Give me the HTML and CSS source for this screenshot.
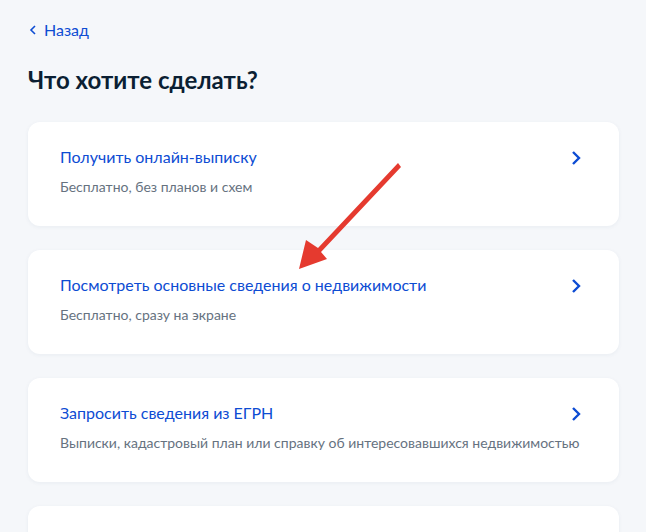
FILE: index.html
```html
<!DOCTYPE html>
<html lang="ru">
<head>
<meta charset="utf-8">
<link rel="stylesheet" href="styles.css">
</head>
<body>
<div class="page">
  <a class="back" href="#"><svg class="back-icon" viewBox="0 0 8 10" width="8" height="10"><path d="M6 1 L2 5 L6 9" fill="none" stroke="#0d4cd3" stroke-width="1.6"/></svg><span>Назад</span></a>
  <h1 class="title">Что хотите сделать?</h1>
  <div class="list">
    <a class="card" href="#">
      <div class="card-text">
        <div class="card-title">Получить онлайн-выписку</div>
        <div class="card-sub">Бесплатно, без планов и схем</div>
      </div>
      <svg class="chev" viewBox="0 0 10 16" width="10" height="16"><path d="M2 2 L8 8 L2 14" fill="none" stroke="#0d4cd3" stroke-width="2.4"/></svg>
    </a>
    <a class="card" href="#">
      <div class="card-text">
        <div class="card-title">Посмотреть основные сведения о недвижимости</div>
        <div class="card-sub">Бесплатно, сразу на экране</div>
      </div>
      <svg class="chev" viewBox="0 0 10 16" width="10" height="16"><path d="M2 2 L8 8 L2 14" fill="none" stroke="#0d4cd3" stroke-width="2.4"/></svg>
    </a>
    <a class="card" href="#">
      <div class="card-text">
        <div class="card-title">Запросить сведения из ЕГРН</div>
        <div class="card-sub">Выписки, кадастровый план или справку об интересовавшихся недвижимостью</div>
      </div>
      <svg class="chev" viewBox="0 0 10 16" width="10" height="16"><path d="M2 2 L8 8 L2 14" fill="none" stroke="#0d4cd3" stroke-width="2.4"/></svg>
    </a>
    <a class="card" href="#"></a>
  </div>
</div>
<svg class="arrow" viewBox="0 0 646 532" width="646" height="532">
  <path d="M401 167 L398 163 L318 248 L306 240 L299 269 L327 259 L321 252 Z" fill="#e53a2f"/>
</svg>
</body>
</html>
```

FILE: styles.css
```css
html, body {
  margin: 0;
  padding: 0;
  background: #f5f7fa;
  font-family: Lato, "Noto Sans", sans-serif;
  overflow: hidden;
  height: 532px;
}
.page {
  padding: 18px 27px 0 28px;
}
.back {
  display: inline-flex;
  align-items: center;
  gap: 7px;
  color: #0d4cd3;
  text-decoration: none;
  font-size: 16px;
  line-height: 24px;
}
.back-icon {
  margin-left: 1px;
}
.title {
  margin: 22px 0 26px;
  font-size: 24px;
  line-height: 32px;
  font-weight: 700;
  color: #0b1f33;
}
.list {
  display: flex;
  flex-direction: column;
  gap: 24px;
}
.card {
  display: flex;
  align-items: flex-start;
  justify-content: space-between;
  background: #fff;
  border-radius: 12px;
  box-shadow: 0 1px 4px rgba(40, 60, 100, 0.06);
  padding: 23px 38px 26px 32px;
  min-height: 55px;
  text-decoration: none;
}
.card-text {
  flex: 1;
  min-width: 0;
}
.card-title {
  color: #0d4cd3;
  font-size: 16px;
  line-height: 24px;
}
.card-sub {
  margin-top: 8px;
  color: #66727f;
  font-size: 14px;
  line-height: 20px;
  white-space: nowrap;
}
.chev {
  flex: none;
  margin-top: 5px;
}
.arrow {
  position: absolute;
  left: 0;
  top: 0;
  pointer-events: none;
}
```
